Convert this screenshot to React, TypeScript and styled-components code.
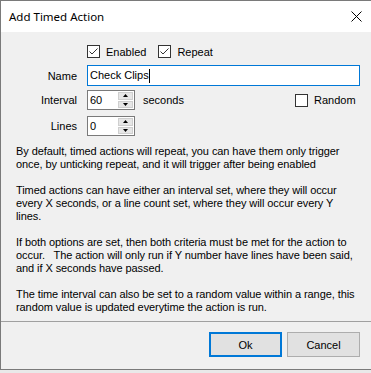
import React from 'react';
import styled, { createGlobalStyle } from 'styled-components';

const GlobalStyle = createGlobalStyle`
  html, body {
    margin: 0;
    padding: 0;
    background: #e9e9e9;
    overflow: hidden;
  }
`;

const Window = styled.div`
  box-sizing: border-box;
  width: 372px;
  height: 370px;
  border: 1px solid #7a7a7a;
  background: #f0f0f0;
  display: flex;
  flex-direction: column;
  font-family: 'Liberation Sans', Arial, sans-serif;
  font-size: 11px;
  color: #000;
`;

const TitleBar = styled.div`
  height: 31px;
  background: #fff;
  display: flex;
  align-items: center;
  justify-content: space-between;
  padding-left: 8px;
`;

const Title = styled.span`
  font-family: 'Noto Sans', 'Liberation Sans', sans-serif;
  font-size: 11.5px;
`;

const CloseBox = styled.div`
  width: 30px;
  height: 31px;
  display: flex;
  align-items: center;
  justify-content: center;
`;

const Body = styled.div`
  flex: 1;
  display: flex;
  flex-direction: column;
  padding-top: 13px;
`;

const CheckRow = styled.div`
  display: flex;
  align-items: center;
  height: 13px;
  padding-left: 86px;
  gap: 12px;
`;

const CheckItem = styled.label<{ $width?: number }>`
  display: flex;
  align-items: center;
  gap: 6px;
  ${(p) => (p.$width ? `width: ${p.$width}px; margin-left: auto; margin-right: 17px;` : '')}
`;

const Box = styled.span`
  box-sizing: border-box;
  width: 13px;
  height: 13px;
  border: 1px solid #333;
  background: #fff;
  display: flex;
  flex-shrink: 0;
`;

const FormRow = styled.div<{ $top: number }>`
  display: flex;
  align-items: center;
  margin-top: ${(p) => p.$top}px;
`;

const FieldLabel = styled.span`
  width: 76px;
  text-align: right;
  margin-right: 10px;
`;

const TextBox = styled.div`
  box-sizing: border-box;
  flex: 1;
  height: 21px;
  margin-right: 11px;
  border: 1px solid #0078d7;
  background: #fff;
  padding-left: 2px;
  line-height: 19px;
  display: flex;
  align-items: center;
`;

const Caret = styled.span`
  width: 1px;
  height: 14px;
  background: #000;
`;

const Spin = styled.div`
  box-sizing: border-box;
  width: 48px;
  height: 20px;
  border: 1px solid #7a7a7a;
  background: #fff;
  display: flex;
`;

const SpinValue = styled.span`
  flex: 1;
  padding-left: 2px;
  line-height: 18px;
`;

const SpinButtons = styled.div`
  width: 15px;
  display: flex;
  flex-direction: column;
  padding: 1px 1px 1px 0;
  gap: 1px;
`;

const SpinButton = styled.div`
  flex: 1;
  background: #e6e6e6;
  border: 1px solid #cfcfcf;
  display: flex;
  align-items: center;
  justify-content: center;
`;

const Unit = styled.span`
  margin-left: 8px;
`;

const Help = styled.div`
  margin-top: 9px;
  padding-left: 15px;
  line-height: 13px;
  letter-spacing: -0.08px;
  white-space: pre;
`;

const Para = styled.p`
  margin: 0 0 13px;
  &:last-child {
    margin-bottom: 0;
  }
`;

const Footer = styled.div`
  margin-top: auto;
  border-top: 1px solid #a0a0a0;
  padding: 10px 11px 12px;
  display: flex;
  justify-content: flex-end;
  gap: 5px;
`;

const Button = styled.button<{ $primary?: boolean }>`
  box-sizing: border-box;
  width: 73px;
  height: 25px;
  padding: 0;
  background: #e1e1e1;
  border: ${(p) => (p.$primary ? '2px solid #0078d7' : '1px solid #adadad')};
  font-family: 'Liberation Sans', Arial, sans-serif;
  font-size: 11px;
  color: #000;
`;

const Check = () => (
  <svg width="11" height="11" viewBox="0 0 11 11">
    <path d="M1.5 5.5 L4 8 L9.5 2.5" fill="none" stroke="#333" strokeWidth="1" />
  </svg>
);

const Arrow = ({ up }: { up?: boolean }) => (
  <svg width="5" height="3" viewBox="0 0 5 3">
    <path d={up ? 'M0 3 L2.5 0 L5 3 Z' : 'M0 0 L2.5 3 L5 0 Z'} fill="#000" />
  </svg>
);

const SpinBox = ({ value }: { value: string }) => (
  <Spin>
    <SpinValue>{value}</SpinValue>
    <SpinButtons>
      <SpinButton>
        <Arrow up />
      </SpinButton>
      <SpinButton>
        <Arrow />
      </SpinButton>
    </SpinButtons>
  </Spin>
);

const App: React.FC = () => {
  return (
    <>
      <GlobalStyle />
      <Window>
        <TitleBar>
          <Title>Add Timed Action</Title>
          <CloseBox>
            <svg width="11" height="11" viewBox="0 0 11 11">
              <path d="M0.5 0.5 L10.5 10.5 M10.5 0.5 L0.5 10.5" stroke="#000" strokeWidth="1" />
            </svg>
          </CloseBox>
        </TitleBar>
        <Body>
          <CheckRow>
            <CheckItem>
              <Box>
                <Check />
              </Box>
              Enabled
            </CheckItem>
            <CheckItem>
              <Box>
                <Check />
              </Box>
              Repeat
            </CheckItem>
          </CheckRow>
          <FormRow $top={7}>
            <FieldLabel>Name</FieldLabel>
            <TextBox>
              Check Clips
              <Caret />
            </TextBox>
          </FormRow>
          <FormRow $top={4}>
            <FieldLabel>Interval</FieldLabel>
            <SpinBox value="60" />
            <Unit>seconds</Unit>
            <CheckItem $width={59}>
              <Box />
              Random
            </CheckItem>
          </FormRow>
          <FormRow $top={6}>
            <FieldLabel>Lines</FieldLabel>
            <SpinBox value="0" />
          </FormRow>
          <Help>
            <Para>
              {'By default, timed actions will repeat, you can have them only trigger\nonce, by unticking repeat, and it will trigger after being enabled'}
            </Para>
            <Para>
              {'Timed actions can have either an interval set, where they will occur\nevery X seconds, or a line count set, where they will occur every Y\nlines.'}
            </Para>
            <Para>
              {'If both options are set, then both criteria must be met for the action to\noccur.   The action will only run if Y number have lines have been said,\nand if X seconds have passed.'}
            </Para>
            <Para>
              {'The time interval can also be set to a random value within a range, this\nrandom value is updated everytime the action is run.'}
            </Para>
          </Help>
          <Footer>
            <Button $primary>Ok</Button>
            <Button>Cancel</Button>
          </Footer>
        </Body>
      </Window>
    </>
  );
};

export default App;
